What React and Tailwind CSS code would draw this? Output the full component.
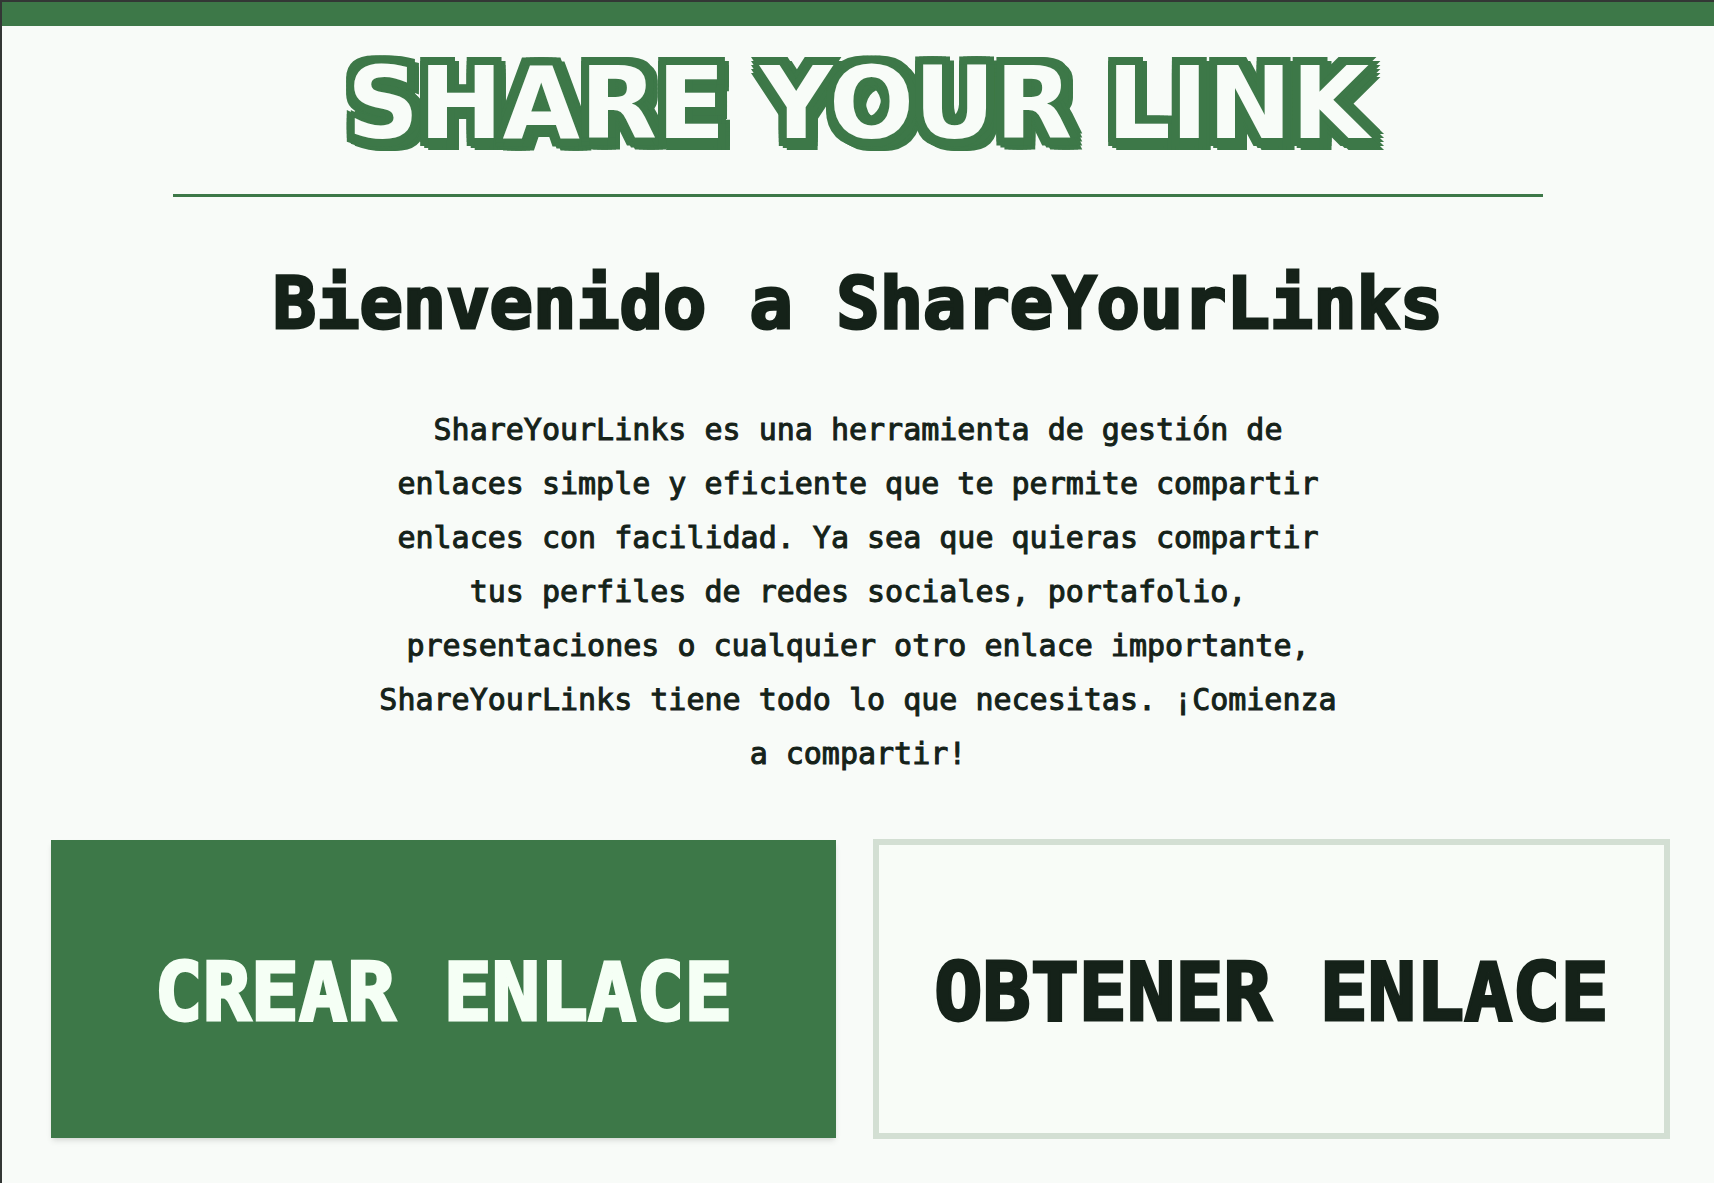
import clsx from 'clsx';

const ACTIONS = [
  { id: 'create', label: 'Crear enlace', variant: 'primary' },
  { id: 'get', label: 'Obtener enlace', variant: 'outline' },
];

function ActionButton({ label, variant }) {
  return (
    <button
      type="button"
      className={clsx(
        'pt-2 text-[80px] leading-none font-bold uppercase whitespace-nowrap cursor-pointer [-webkit-text-stroke:3px]',
        variant === 'primary' && 'h-[298px] bg-[#3d7848] text-[#f5fff5] shadow-md',
        variant === 'outline' && 'h-[300px] border-6 border-[#d3dfd3] bg-[#f8fcf7] text-[#152219]'
      )}
    >
      {label}
    </button>
  );
}

export default function App() {
  return (
    <div className="min-h-screen border-t-2 border-l-2 border-[#333735] bg-[#f8fbf8] text-[#152219] font-['DejaVu_Sans_Mono','Liberation_Mono',monospace]">
      <div className="h-6 bg-[#3d7848]" />

      <header className="w-4/5 mx-auto pt-7 pb-10 border-b-3 border-[#3d7848] text-center">
        {/* Blocky outline, heavier towards the bottom right */}
        <h1 className="font-['DejaVu_Sans',sans-serif] font-bold text-[100px] leading-[100px] text-[#f8fcf8] whitespace-nowrap [text-shadow:-8px_0_#3d7848,8px_0_#3d7848,0_-8px_#3d7848,0_8px_#3d7848,-8px_-8px_#3d7848,-4px_-8px_#3d7848,4px_-8px_#3d7848,8px_-8px_#3d7848,8px_-4px_#3d7848,-8px_-4px_#3d7848,-8px_4px_#3d7848,-8px_8px_#3d7848,8px_8px_#3d7848,-4px_10px_#3d7848,0_12px_#3d7848,4px_12px_#3d7848,8px_12px_#3d7848,12px_12px_#3d7848,12px_8px_#3d7848,12px_4px_#3d7848,12px_0_#3d7848,12px_-4px_#3d7848]">
          SHARE YOUR LINK
        </h1>
      </header>

      <main>
        <section className="pt-14 text-center">
          <h2 className="text-7xl leading-[100px] font-bold [-webkit-text-stroke:3px]">Bienvenido a ShareYourLinks</h2>
          <p className="max-w-[980px] mx-auto mt-[50px] text-[30px] leading-[54px] [-webkit-text-stroke:1px]">
            ShareYourLinks es una herramienta de gestión de enlaces simple y eficiente que te permite
            compartir enlaces con facilidad. Ya sea que quieras compartir tus perfiles de redes
            sociales, portafolio, presentaciones o cualquier otro enlace importante, ShareYourLinks
            tiene todo lo que necesitas. ¡Comienza a compartir!
          </p>
        </section>

        <div className="grid grid-cols-[785fr_797fr] items-center gap-[37px] pt-[58px] pb-11 pl-[49px] pr-11">
          {ACTIONS.map((action) => (
            <ActionButton key={action.id} label={action.label} variant={action.variant} />
          ))}
        </div>
      </main>
    </div>
  );
}
